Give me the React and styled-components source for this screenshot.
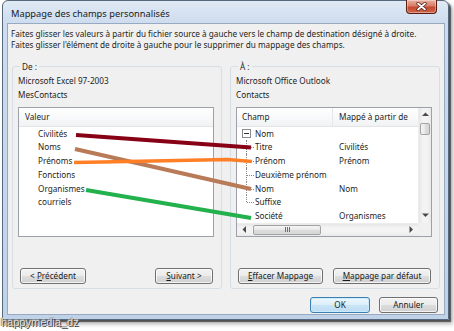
import React from 'react';
import styled, { createGlobalStyle } from 'styled-components';

const UI_FONT = '"Noto Sans", "Liberation Sans", "DejaVu Sans", sans-serif';
const FS = '8.2px';

const GlobalStyle = createGlobalStyle`
  html, body { margin: 0; padding: 0; background: #ffffff; }
  body { font-family: ${UI_FONT}; color: #1e1e1e; }
  * { box-sizing: border-box; }
`;

const Page = styled.div`
  position: relative;
  width: 454px;
  height: 331px;
  overflow: hidden;
  background: #ffffff;
  padding-left: 2px;
`;

const Window = styled.div`
  width: 447px;
  height: 320px;
  border: 1px solid #56687e;
  border-radius: 6px 6px 0 0;
  background: linear-gradient(180deg, #e0eaf5 0px, #cddcee 22px, #bfd2e8 100%);
  box-shadow: 2px 2px 1px rgba(0, 0, 0, 0.55), 4px 4px 4px rgba(0, 0, 0, 0.3);
  display: flex;
  flex-direction: column;
  padding: 0 3px 4px 4px;
`;

const TitleBar = styled.div`
  height: 22px;
  display: flex;
  align-items: flex-start;
  justify-content: space-between;
  padding-left: 4px;
`;

const TitleText = styled.div`
  margin-top: 7px;
  font-size: 9.3px;
  line-height: 12px;
  color: #1a1a1a;
`;

const CloseButton = styled.div`
  width: 31px;
  height: 14px;
  margin-right: 8px;
  margin-top: -1px;
  border: 1px solid #5a1d12;
  border-top: none;
  border-radius: 0 0 4px 4px;
  background: linear-gradient(180deg, #eab0a0 0%, #d77d66 45%, #c44a30 55%, #d0674a 100%);
  box-shadow: inset 0 0 0 1px rgba(255, 255, 255, 0.35);
  display: flex;
  align-items: center;
  justify-content: center;
`;

const Client = styled.div`
  flex: 1;
  background: #f0f0f0;
  border: 1px solid #97aac2;
  display: flex;
  flex-direction: column;
`;

const Instructions = styled.div`
  padding: 5px 0 0 3px;
  font-size: ${FS};
  line-height: 10.5px;
  white-space: nowrap;
`;

const GroupsRow = styled.div`
  display: flex;
  gap: 8px;
  padding-left: 4px;
  margin-top: 11px;
`;

const GroupBox = styled.fieldset`
  width: 210px;
  margin: 0;
  padding: 0 7px 4px 5px;
  border: 1px solid #d5dfe5;
  border-radius: 3px;
  min-width: 0;
`;

const GroupLabel = styled.legend`
  margin-left: 2px;
  padding: 0 2px;
  font-size: ${FS};
  line-height: 11px;
`;

const SourceLines = styled.div`
  padding-top: 1.5px;
  font-size: ${FS};
  line-height: 14px;
`;

const ListBox = styled.div`
  margin-top: 5px;
  width: 196px;
  height: 130px;
  background: #ffffff;
  border: 1px solid #9ca0a8;
  overflow: hidden;
  font-size: ${FS};
`;

const SimpleList = styled(ListBox)`
  display: flex;
  flex-direction: column;
`;

const GridList = styled(ListBox)`
  display: grid;
  grid-template-columns: 1fr 13px;
  grid-template-rows: 1fr 13px;
`;

const Header = styled.div`
  height: 19px;
  flex: none;
  display: flex;
  background: linear-gradient(180deg, #ffffff 0%, #f7f8f9 60%, #f1f2f4 100%);
  border-bottom: 1px solid #e3e4e6;
`;

const HeaderCell = styled.div`
  width: ${(p) => p.$w || 'auto'};
  flex: ${(p) => (p.$w ? 'none' : '1')};
  padding-left: ${(p) => p.$pad || '6px'};
  line-height: 18px;
  border-right: ${(p) => (p.$divider ? '1px solid #e4e7eb' : 'none')};
  white-space: nowrap;
  overflow: hidden;
`;

const Row = styled.div`
  height: 13.8px;
  line-height: 13.8px;
  display: flex;
  align-items: center;
  white-space: nowrap;
  padding-left: ${(p) => p.$pad || '0'};
`;

const FieldCell = styled.div`
  width: 96px;
  flex: none;
  height: 100%;
  display: flex;
  align-items: center;
  padding-left: 5px;
`;

const FromCell = styled.div`
  padding-left: 6px;
`;

const Guide = styled.span`
  position: relative;
  width: 13px;
  height: 100%;
  flex: none;
  &::before {
    content: '';
    position: absolute;
    left: 4px;
    top: 0;
    height: ${(p) => (p.$last ? '50%' : '100%')};
    border-left: 1px dotted #8a8a8a;
  }
  &::after {
    content: '';
    position: absolute;
    left: 5px;
    top: 50%;
    width: 7px;
    border-top: 1px dotted #8a8a8a;
  }
`;

const Spacer13 = styled.span`
  width: 13px;
  flex: none;
`;

const ExpandBox = styled.span`
  width: 9px;
  height: 9px;
  flex: none;
  margin-right: 4px;
  border: 1px solid #8c8c8c;
  background: #ffffff;
  position: relative;
  &::after {
    content: '';
    position: absolute;
    left: 1px;
    right: 1px;
    top: 3px;
    border-top: 1px solid #333;
  }
`;

const MainArea = styled.div`
  display: flex;
  flex-direction: column;
  overflow: hidden;
`;

const VScroll = styled.div`
  display: flex;
  flex-direction: column;
  background: linear-gradient(90deg, #e6e6e6 0%, #f3f3f3 30%, #f3f3f3 70%, #e9e9e9 100%);
  border-left: 1px solid #ececec;
`;

const HScroll = styled.div`
  display: flex;
  align-items: stretch;
  background: linear-gradient(180deg, #e6e6e6 0%, #f3f3f3 30%, #f3f3f3 70%, #e9e9e9 100%);
  border-top: 1px solid #ececec;
`;

const Corner = styled.div`
  background: #f0f0f0;
`;

const ArrowButton = styled.div`
  flex: none;
  width: ${(p) => (p.$h ? '14px' : 'auto')};
  height: ${(p) => (p.$h ? 'auto' : '14px')};
  display: flex;
  align-items: center;
  justify-content: center;
`;

const Thumb = styled.div`
  flex: none;
  border: 1px solid #a3a3a3;
  border-radius: 2px;
  background: ${(p) =>
    p.$h
      ? 'linear-gradient(180deg, #f5f5f5 0%, #e8e8e8 50%, #dcdcdc 51%, #d6d6d6 100%)'
      : 'linear-gradient(90deg, #f5f5f5 0%, #e8e8e8 50%, #dcdcdc 51%, #d6d6d6 100%)'};
  ${(p) =>
    p.$h
      ? 'width: 68px; margin-left: 2px; margin-top: 1px; margin-bottom: 1px;'
      : 'height: 12px; margin: 1px 1px 0 1px;'}
  display: flex;
  align-items: center;
  justify-content: center;
  gap: 1px;
`;

const GripLine = styled.span`
  width: 1px;
  height: 5px;
  background: #6f6f6f;
`;

const Fill = styled.div`
  flex: 1;
`;

const ButtonRow = styled.div`
  display: flex;
  justify-content: space-between;
  margin-top: 31px;
  padding: 0 1px 0 2px;
`;

const Button = styled.div`
  width: ${(p) => p.$w}px;
  height: 16px;
  border: 1px solid ${(p) => (p.$default ? '#3c7fb1' : '#707070')};
  border-radius: 3px;
  background: ${(p) =>
    p.$default
      ? 'linear-gradient(180deg, #eef7fd 0%, #dceefa 48%, #c9e4f6 52%, #bddcf2 100%)'
      : 'linear-gradient(180deg, #f2f2f2 0%, #ebebeb 48%, #dddddd 52%, #cfcfcf 100%)'};
  box-shadow: inset 0 0 0 1px ${(p) => (p.$default ? 'rgba(200,235,255,0.9)' : 'rgba(255,255,255,0.75)')};
  font-size: ${FS};
  line-height: 14px;
  text-align: center;
  white-space: nowrap;
  color: #1a1a1a;
  u {
    text-decoration-thickness: 1px;
    text-underline-offset: 1px;
  }
`;

const Footer = styled.div`
  display: flex;
  justify-content: flex-end;
  gap: 9px;
  margin-top: 8px;
  padding-right: 6px;
`;

const Overlay = styled.svg`
  position: absolute;
  left: 0;
  top: 0;
  width: 454px;
  height: 331px;
  pointer-events: none;
`;

const Watermark = styled.div`
  position: absolute;
  left: 1px;
  top: 316px;
  font-family: "Liberation Sans", Arial, sans-serif;
  font-size: 11px;
  line-height: 12px;
  color: #dedede;
  text-shadow: 1px 1px 0 #3a3a3a, -1px 0 0 #8a8a8a, 0 -1px 0 #9a9a9a;
`;

const Arrow = ({ dir }) => {
  const pts = {
    up: '0,4 3.5,0.5 7,4',
    down: '0,0.5 3.5,4 7,0.5',
    left: '4,0 0.5,3.5 4,7',
    right: '0.5,0 4,3.5 0.5,7',
  }[dir];
  const vertical = dir === 'up' || dir === 'down';
  return (
    <svg width={vertical ? 7 : 5} height={vertical ? 5 : 7} viewBox={vertical ? '0 0 7 5' : '0 0 5 7'}>
      <polygon points={pts} fill="#4a4a4a" />
    </svg>
  );
};

const sourceFields = ['Civilités', 'Noms', 'Prénoms', 'Fonctions', 'Organismes', 'courriels'];

const children = [
  { name: 'Titre', from: 'Civilités' },
  { name: 'Prénom', from: 'Prénom' },
  { name: 'Deuxième prénom', from: '' },
  { name: 'Nom', from: 'Nom' },
  { name: 'Suffixe', from: '', last: true },
];

const links = [
  { color: '#880015', points: '76,135 251,147.5', w: 4 },
  { color: '#b97a57', points: '75,149 251,189', w: 4 },
  { color: '#ff7f27', points: '74,162.5 102,162 227,159.5 252,161.5', w: 3.6 },
  { color: '#22b14c', points: '86,190 251,218', w: 4 },
];

export default function App() {
  return (
    <>
      <GlobalStyle />
      <Page>
        <Window>
          <TitleBar>
            <TitleText>Mappage des champs personnalisés</TitleText>
            <CloseButton>
              <svg width="11" height="9" viewBox="0 0 11 9">
                <path d="M2 1.5 L9 7.5 M9 1.5 L2 7.5" stroke="#4a1a12" strokeWidth="3.2" strokeLinecap="round" />
                <path d="M2 1.5 L9 7.5 M9 1.5 L2 7.5" stroke="#ffffff" strokeWidth="1.8" strokeLinecap="round" />
              </svg>
            </CloseButton>
          </TitleBar>
          <Client>
            <Instructions>
              <div>Faites glisser les valeurs à partir du fichier source à gauche vers le champ de destination désigné à droite.</div>
              <div>Faites glisser l'élément de droite à gauche pour le supprimer du mappage des champs.</div>
            </Instructions>
            <GroupsRow>
              <GroupBox>
                <GroupLabel>De :</GroupLabel>
                <SourceLines>
                  <div>Microsoft Excel 97-2003</div>
                  <div>MesContacts</div>
                </SourceLines>
                <SimpleList>
                  <Header>
                    <HeaderCell>Valeur</HeaderCell>
                  </Header>
                  {sourceFields.map((f) => (
                    <Row key={f} $pad="19px">{f}</Row>
                  ))}
                </SimpleList>
                <ButtonRow>
                  <Button $w={66}>&lt; <u>P</u>récédent</Button>
                  <Button $w={58}><u>S</u>uivant &gt;</Button>
                </ButtonRow>
              </GroupBox>
              <GroupBox>
                <GroupLabel>À :</GroupLabel>
                <SourceLines>
                  <div>Microsoft Office Outlook</div>
                  <div>Contacts</div>
                </SourceLines>
                <GridList>
                  <MainArea>
                    <Header>
                      <HeaderCell $w="96px" $pad="5px" $divider>Champ</HeaderCell>
                      <HeaderCell>Mappé à partir de</HeaderCell>
                    </Header>
                    <Row>
                      <FieldCell>
                        <ExpandBox />
                        Nom
                      </FieldCell>
                    </Row>
                    {children.map((c) => (
                      <Row key={c.name}>
                        <FieldCell>
                          <Guide $last={c.last} />
                          {c.name}
                        </FieldCell>
                        <FromCell>{c.from}</FromCell>
                      </Row>
                    ))}
                    <Row>
                      <FieldCell>
                        <Spacer13 />
                        Société
                      </FieldCell>
                      <FromCell>Organismes</FromCell>
                    </Row>
                  </MainArea>
                  <VScroll>
                    <ArrowButton><Arrow dir="up" /></ArrowButton>
                    <Thumb />
                    <Fill />
                    <ArrowButton><Arrow dir="down" /></ArrowButton>
                  </VScroll>
                  <HScroll>
                    <ArrowButton $h><Arrow dir="left" /></ArrowButton>
                    <Thumb $h>
                      <GripLine />
                      <GripLine />
                      <GripLine />
                    </Thumb>
                    <Fill />
                    <ArrowButton $h><Arrow dir="right" /></ArrowButton>
                  </HScroll>
                  <Corner />
                </GridList>
                <ButtonRow>
                  <Button $w={85}><u>E</u>ffacer Mappage</Button>
                  <Button $w={98}><u>M</u>appage par défaut</Button>
                </ButtonRow>
              </GroupBox>
            </GroupsRow>
            <Footer>
              <Button $w={60} $default>OK</Button>
              <Button $w={59}>Annuler</Button>
            </Footer>
          </Client>
        </Window>
        <Overlay viewBox="0 0 454 331">
          {links.map((l) => (
            <polyline
              key={l.color}
              points={l.points}
              fill="none"
              stroke={l.color}
              strokeWidth={l.w}
              strokeLinejoin="round"
            />
          ))}
        </Overlay>
        <Watermark>happymedia_dz</Watermark>
      </Page>
    </>
  );
}
